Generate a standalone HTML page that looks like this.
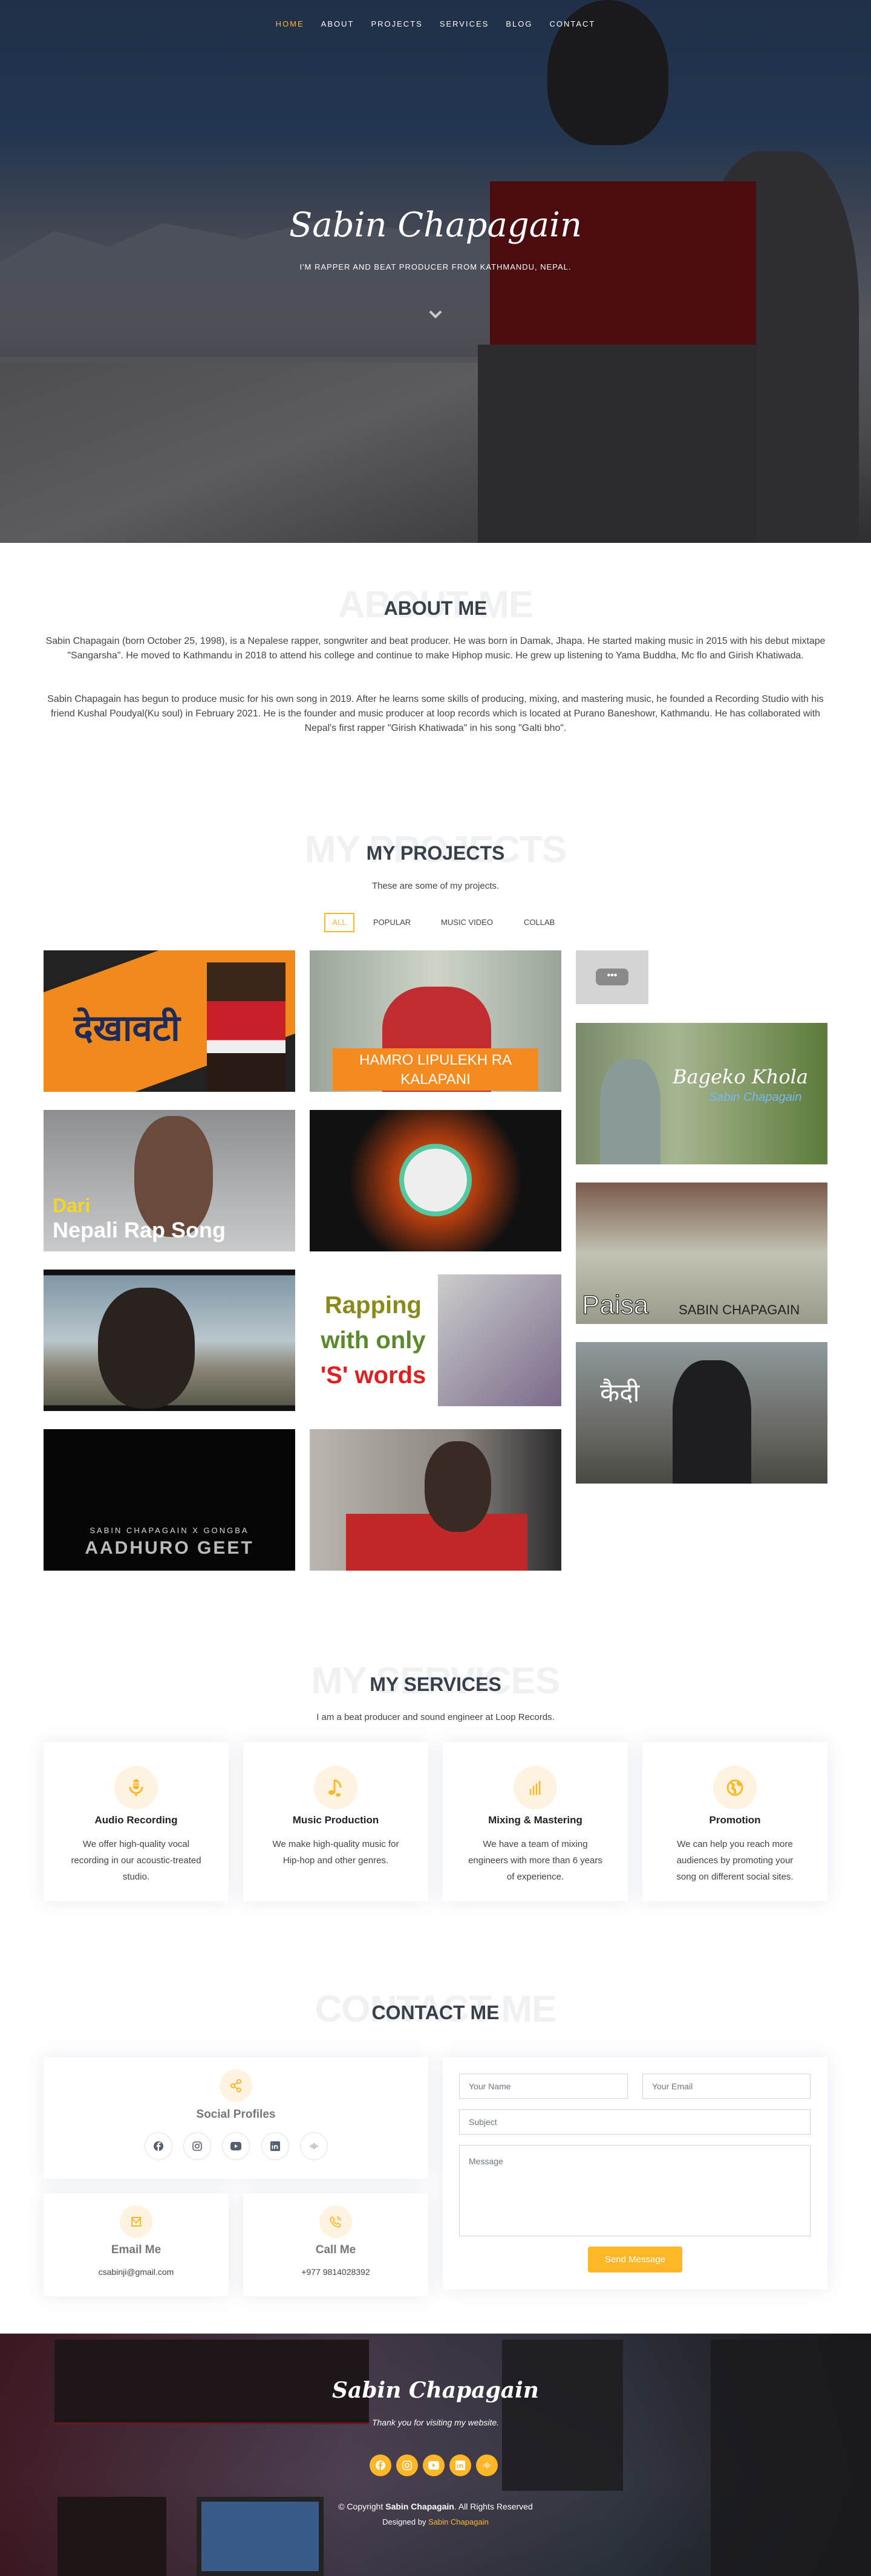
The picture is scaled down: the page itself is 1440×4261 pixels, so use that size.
<!DOCTYPE html>
<html><head><meta charset="utf-8">
<style>
*{box-sizing:border-box;margin:0;padding:0}
body{width:1440px;height:4261px;position:relative;background:#fff;font-family:"Liberation Sans",sans-serif;color:#444;overflow:hidden}
.abs{position:absolute}
.hero{left:0;top:0;width:1440px;height:898px;background:
linear-gradient(180deg,#1f3048 0%,#233650 25%,#3e4452 40%,#55575c 60%,#4a4a4e 80%,#2e2e32 100%);overflow:hidden}
nav{left:0;top:32px;width:1440px;text-align:center;font-size:13px;letter-spacing:2px;color:#fff}
nav span{margin:0 14px}
.sec-ghost{left:0;width:1440px;text-align:center;font-size:62px;font-weight:bold;color:#f0f1f3;letter-spacing:-1px}
.sec-h{left:0;width:1440px;text-align:center;font-size:32px;font-weight:bold;color:#37404a}
.p{left:72px;width:1296px;text-align:center;font-size:15.9px;line-height:24px;color:#444}
.tile{position:absolute;width:416px;height:234px;overflow:hidden}
.card{position:absolute;background:#fff;box-shadow:0 0 29px rgba(68,88,144,.12)}
.ic{position:absolute;border-radius:50%;background:#fef3e0;display:flex;align-items:center;justify-content:center}
.ct{position:absolute;width:100%;text-align:center}
.inp{position:absolute;border:1px solid #ced4da;font-size:14px;color:#6c757d;padding:0 15px;display:flex;align-items:center}
.soc{position:absolute;width:46px;height:46px;border-radius:50%;border:1px solid #e3e3e3;top:3527px;display:flex;align-items:center;justify-content:center}
.fs{position:absolute;width:36px;height:36px;border-radius:50%;background:#ffb727;top:4060px;display:flex;align-items:center;justify-content:center}
</style></head><body>

<div class="abs hero">
 <div class="abs" style="left:0;top:330px;width:900px;height:260px;background:linear-gradient(180deg,rgba(90,95,105,.5),rgba(70,72,80,.7));clip-path:polygon(0 40%,10% 20%,20% 30%,30% 15%,45% 25%,60% 12%,75% 20%,100% 30%,100% 100%,0 100%)"></div>
 <div class="abs" style="left:0;top:600px;width:900px;height:298px;background:linear-gradient(160deg,#4e4e52,#5c5c60 50%,#3a3a3e)"></div>
 <div class="abs" style="left:905px;top:0;width:200px;height:240px;border-radius:50% 50% 40% 40%;background:#1a1a1e"></div>
 <div class="abs" style="left:1150px;top:250px;width:270px;height:648px;border-radius:40% 40% 0 0;background:#2e2e32"></div>
 <div class="abs" style="left:810px;top:300px;width:440px;height:300px;background:#4a0c0e"></div>
 <div class="abs" style="left:790px;top:570px;width:460px;height:328px;background:#2c2c30"></div>
</div>
<nav class="abs"><span style="color:#ffb727">HOME</span><span>ABOUT</span><span>PROJECTS</span><span>SERVICES</span><span>BLOG</span><span>CONTACT</span></nav>
<div class="abs" style="left:0;top:340px;width:1440px;text-align:center;font-family:'DejaVu Serif',serif;font-style:italic;font-size:56px;color:#fff">Sabin Chapagain</div>
<div class="abs" style="left:0;top:434px;width:1440px;text-align:center;font-size:13px;letter-spacing:1px;color:#fff">I'M RAPPER AND BEAT PRODUCER FROM KATHMANDU, NEPAL.</div>
<svg class="abs" style="left:708px;top:510px" width="24" height="20" viewBox="0 0 24 20"><path d="M3 5 L12 14 L21 5" stroke="#ccc" stroke-width="4" fill="none"/></svg>

<div class="abs sec-ghost" style="top:965px">ABOUT ME</div>
<div class="abs sec-h" style="top:988px">ABOUT ME</div>
<div class="abs p" style="top:1049px">Sabin Chapagain (born October 25, 1998), is a Nepalese rapper, songwriter and beat producer. He was born in Damak, Jhapa. He started making music in 2015 with his debut mixtape "Sangarsha". He moved to Kathmandu in 2018 to attend his college and continue to make Hiphop music. He grew up listening to Yama Buddha, Mc flo and Girish Khatiwada.</div>
<div class="abs p" style="top:1145px">Sabin Chapagain has begun to produce music for his own song in 2019. After he learns some skills of producing, mixing, and mastering music, he founded a Recording Studio with his friend Kushal Poudyal(Ku soul) in February 2021. He is the founder and music producer at loop records which is located at Purano Baneshowr, Kathmandu. He has collaborated with Nepal's first rapper "Girish Khatiwada" in his song "Galti bho".</div>

<div class="abs sec-ghost" style="top:1370px">MY PROJECTS</div>
<div class="abs sec-h" style="top:1393px">MY PROJECTS</div>
<div class="abs" style="left:0;top:1457px;width:1440px;text-align:center;font-size:15px">These are some of my projects.</div>
<div class="abs" style="left:536px;top:1510px;width:50px;height:32px;border:2px solid #ffb727;color:#ffb727;font-size:13px;text-align:center;line-height:28px">ALL</div>
<div class="abs" style="left:617px;top:1518px;font-size:13px;color:#444">POPULAR</div>
<div class="abs" style="left:729px;top:1518px;font-size:13px;color:#444">MUSIC VIDEO</div>
<div class="abs" style="left:866px;top:1518px;font-size:13px;color:#444">COLLAB</div>

<div class="tile" style="left:72px;top:1572px;background:linear-gradient(160deg,#222 0 18%,#f08a1c 18% 75%,#222 75%)"><div class="abs" style="left:50px;top:80px;font-size:60px;font-weight:bold;color:#1d2a5a;font-family:'Noto Sans CJK SC',sans-serif">देखावटी</div><div class="abs" style="left:270px;top:20px;width:130px;height:214px;background:linear-gradient(#3a2618 0 30%,#c71e28 30% 60%,#eee 60% 70%,#2a1a14 70%)"></div></div>
<div class="tile" style="left:512px;top:1572px;background:linear-gradient(90deg,#9aa59a,#cfd4c8,#9aa59a)"><div class="abs" style="left:120px;top:60px;width:180px;height:174px;border-radius:40% 40% 0 0;background:#c02c30"></div><div class="abs" style="left:38px;top:162px;width:340px;height:70px;background:#f58b1f;color:#fff;font-size:24px;text-align:center;line-height:32px;padding-top:4px">HAMRO LIPULEKH RA<br>KALAPANI</div></div>
<div class="tile" style="left:952px;top:1572px;width:120px;height:89px;background:#d4d4d4"><div class="abs" style="left:33px;top:30px;width:54px;height:28px;border-radius:8px;background:#8a8a8a;color:#fff;text-align:center;font-weight:bold;line-height:24px">•••</div></div>

<div class="tile" style="left:72px;top:1836px;background:linear-gradient(#8c8e90,#c9cacb)"><div class="abs" style="left:150px;top:10px;width:130px;height:200px;border-radius:45%;background:#6a4a3a"></div><div class="abs" style="left:15px;top:140px;font-size:32px;font-weight:bold;color:#f5d623">Dari</div><div class="abs" style="left:15px;top:178px;font-size:36px;font-weight:bold;color:#fff">Nepali Rap Song</div></div>
<div class="tile" style="left:512px;top:1836px;background:radial-gradient(circle at 50% 50%,#e8701a 0,#a83a10 30%,#111 60%)"><div class="abs" style="left:148px;top:56px;width:120px;height:120px;border-radius:50%;background:#eee;border:8px solid #56c8a0"></div></div>
<div class="tile" style="left:952px;top:1692px;background:linear-gradient(90deg,#7a8a6a,#a6b690 40%,#5c7a3a)"><div class="abs" style="left:40px;top:60px;width:100px;height:174px;border-radius:40% 40% 0 0;background:#8a9a98"></div><div class="abs" style="left:160px;top:70px;font-family:'DejaVu Serif',serif;font-style:italic;font-size:32px;color:#fff">Bageko Khola</div><div class="abs" style="left:220px;top:112px;font-style:italic;font-size:20px;color:#7ab8f0">Sabin Chapagain</div></div>

<div class="tile" style="left:72px;top:2100px;background:linear-gradient(#111 0 4%,#7f97a6 4%,#b9c6cc 50%,#8a8576 70%,#5a5a4a 96%,#111 96%)"><div class="abs" style="left:90px;top:30px;width:160px;height:200px;border-radius:45%;background:#2a221e"></div></div>
<div class="tile" style="left:512px;top:2100px;background:#fff"><div class="abs" style="left:0;top:30px;width:210px;font-size:40px;font-weight:bold;text-align:center;line-height:58px;color:#8a8a1a">Rapping<br><span style="color:#5a8a2a">with only</span><br><span style="color:#e02020">'S' words</span></div><div class="abs" style="left:212px;top:8px;width:204px;height:218px;background:linear-gradient(135deg,#ccc,#7a6a8a)"></div></div>
<div class="tile" style="left:952px;top:1956px;background:linear-gradient(#7a5a4a,#c2c2b2 50%,#9a9a8a)"><div class="abs" style="left:10px;top:178px;font-size:44px;color:#fff;-webkit-text-stroke:1px #000">Paisa</div><div class="abs" style="left:170px;top:198px;font-size:22px;color:#222">SABIN CHAPAGAIN</div></div>

<div class="tile" style="left:72px;top:2364px;background:#050505"><div class="abs" style="left:0;top:160px;width:416px;text-align:center;font-size:13px;letter-spacing:3px;color:#ddd">SABIN CHAPAGAIN X GONGBA</div><div class="abs" style="left:0;top:180px;width:416px;text-align:center;font-size:30px;letter-spacing:3px;color:#bbb;font-weight:bold">AADHURO GEET</div></div>
<div class="tile" style="left:512px;top:2364px;background:linear-gradient(90deg,#bcb6b0,#8a8480 60%,#2a2a2a)"><div class="abs" style="left:60px;top:140px;width:300px;height:94px;background:#c2282a"></div><div class="abs" style="left:190px;top:20px;width:110px;height:150px;border-radius:45%;background:#3a2a24"></div></div>
<div class="tile" style="left:952px;top:2220px;background:linear-gradient(#8f9a9c,#6a6a66 60%,#4a4a44)"><div class="abs" style="left:160px;top:30px;width:130px;height:204px;border-radius:40% 40% 0 0;background:#1e1e22"></div><div class="abs" style="left:40px;top:50px;font-size:42px;color:#fff;font-family:'Noto Sans CJK SC',sans-serif">कैदी</div></div>

<div class="abs sec-ghost" style="top:2745px">MY SERVICES</div>
<div class="abs sec-h" style="top:2768px">MY SERVICES</div>
<div class="abs" style="left:0;top:2832px;width:1440px;text-align:center;font-size:15px">I am a beat producer and sound engineer at Loop Records.</div>

<div class="card" style="left:72px;top:2882px;width:306px;height:263px"><div class="ic" style="left:117px;top:39px;width:72px;height:72px"><svg width="28" height="30" viewBox="0 0 28 30"><rect x="9" y="1" width="10" height="17" rx="5" fill="#ffb727"/><path d="M4 14 a10 10 0 0 0 20 0" stroke="#ffb727" stroke-width="3" fill="none"/><path d="M14 24v5" stroke="#ffb727" stroke-width="3"/><path d="M9 7h10M9 11h10" stroke="#fef3e0" stroke-width="1.5"/></svg></div><div class="ct" style="top:119px;font-weight:bold;font-size:17px;color:#222">Audio Recording</div><div class="ct" style="top:155px;padding:0 40px;font-size:15px;line-height:27px">We offer high-quality vocal recording in our acoustic-treated studio.</div></div>
<div class="card" style="left:402px;top:2882px;width:306px;height:263px"><div class="ic" style="left:117px;top:39px;width:72px;height:72px"><svg width="28" height="32" viewBox="0 0 28 32"><path d="M12 3v22" stroke="#ffb727" stroke-width="3"/><path d="M12 3c6 3 10 6 10 13" stroke="#ffb727" stroke-width="3" fill="none"/><ellipse cx="7" cy="24" rx="5" ry="4" fill="#ffb727"/><ellipse cx="18" cy="28" rx="4" ry="3" fill="#ffb727"/></svg></div><div class="ct" style="top:119px;font-weight:bold;font-size:17px;color:#222">Music Production</div><div class="ct" style="top:155px;padding:0 40px;font-size:15px;line-height:27px">We make high-quality music for Hip-hop and other genres.</div></div>
<div class="card" style="left:732px;top:2882px;width:306px;height:263px"><div class="ic" style="left:117px;top:39px;width:72px;height:72px"><svg width="24" height="24" viewBox="0 0 24 24"><path d="M4 24V14M9 24V9M14 24V5M19 24V1" stroke="#ffb727" stroke-width="2.5"/></svg></div><div class="ct" style="top:119px;font-weight:bold;font-size:17px;color:#222">Mixing &amp; Mastering</div><div class="ct" style="top:155px;padding:0 40px;font-size:15px;line-height:27px">We have a team of mixing engineers with more than 6 years of experience.</div></div>
<div class="card" style="left:1062px;top:2882px;width:306px;height:263px"><div class="ic" style="left:117px;top:39px;width:72px;height:72px"><svg width="28" height="28" viewBox="0 0 28 28"><circle cx="14" cy="14" r="12" stroke="#ffb727" stroke-width="3" fill="none"/><path d="M8 6l4 4-2 5 4 3v6M18 5l2 4 4 1" stroke="#ffb727" stroke-width="4" fill="none"/></svg></div><div class="ct" style="top:119px;font-weight:bold;font-size:17px;color:#222">Promotion</div><div class="ct" style="top:155px;padding:0 40px;font-size:15px;line-height:27px">We can help you reach more audiences by promoting your song on different social sites.</div></div>

<div class="abs sec-ghost" style="top:3288px">CONTACT ME</div>
<div class="abs sec-h" style="top:3311px">CONTACT ME</div>

<div class="card" style="left:72px;top:3403px;width:636px;height:201px"><div class="ic" style="left:291px;top:20px;width:54px;height:54px"><svg width="20" height="22" viewBox="0 0 20 22"><circle cx="15" cy="4" r="3" stroke="#ffb727" stroke-width="2" fill="none"/><circle cx="5" cy="11" r="3" stroke="#ffb727" stroke-width="2" fill="none"/><circle cx="15" cy="18" r="3" stroke="#ffb727" stroke-width="2" fill="none"/><path d="M7.5 9.5l5-4M7.5 12.5l5 4" stroke="#ffb727" stroke-width="2"/></svg></div><div class="ct" style="top:84px;font-weight:bold;font-size:19px;color:#777">Social Profiles</div></div>
<div class="soc" style="left:239px"><svg width="18" height="18" viewBox="0 0 18 18"><circle cx="9" cy="9" r="8" fill="#556070"/><path d="M10 17V10h2.3l.3-2.5H10V6c0-.7.3-1.2 1.2-1.2h1.4V2.6H10.6C8.6 2.6 7.5 3.8 7.5 5.7v1.8H5.5V10h2v7z" fill="#fff"/></svg></div>
<div class="soc" style="left:303px"><svg width="16" height="16" viewBox="0 0 16 16"><rect x="1" y="1" width="14" height="14" rx="4" stroke="#556070" stroke-width="1.6" fill="none"/><circle cx="8" cy="8" r="3.2" stroke="#556070" stroke-width="1.6" fill="none"/><circle cx="12" cy="4" r=".9" fill="#556070"/></svg></div>
<div class="soc" style="left:367px"><svg width="18" height="14" viewBox="0 0 18 14"><rect width="18" height="14" rx="4" fill="#556070"/><path d="M7 4l5 3-5 3z" fill="#fff"/></svg></div>
<div class="soc" style="left:432px"><svg width="16" height="16" viewBox="0 0 16 16"><rect width="16" height="16" rx="2" fill="#556070"/><path d="M3.5 6.5v6M3.5 3.5v.5M7 12.5v-6M7 9c0-2 4.5-3 4.5 0v3.5" stroke="#fff" stroke-width="1.8" fill="none"/></svg></div>
<div class="soc" style="left:496px"><svg width="16" height="16" viewBox="0 0 16 16"><path d="M2 7v2M5 5v6M8 3v10M11 5v6M14 7v2" stroke="#8a95a5" stroke-width="1.4"/></svg></div>

<div class="card" style="left:72px;top:3628px;width:306px;height:170px"><div class="ic" style="left:126px;top:20px;width:54px;height:54px"><svg width="18" height="18" viewBox="0 0 18 18"><rect x="2" y="2" width="14" height="14" stroke="#ffb727" stroke-width="2" fill="none"/><path d="M2 3l7 8 7-8" stroke="#ffb727" stroke-width="2" fill="none"/></svg></div><div class="ct" style="top:83px;font-weight:bold;font-size:19px;color:#777">Email Me</div><div class="ct" style="top:122px;font-size:14px">csabinji@gmail.com</div></div>
<div class="card" style="left:402px;top:3628px;width:306px;height:170px"><div class="ic" style="left:126px;top:20px;width:54px;height:54px"><svg width="20" height="20" viewBox="0 0 20 20"><path d="M4 2l4 4-2 2c1 3 3 5 6 6l2-2 4 4-3 3C8 18 2 12 1 5z" stroke="#ffb727" stroke-width="1.8" fill="none"/><path d="M12 2a6 6 0 0 1 6 6M12 5a3 3 0 0 1 3 3" stroke="#ffb727" stroke-width="1.6" fill="none"/></svg></div><div class="ct" style="top:83px;font-weight:bold;font-size:19px;color:#777">Call Me</div><div class="ct" style="top:122px;font-size:14px">+977 9814028392</div></div>

<div class="card" style="left:732px;top:3403px;width:636px;height:384px"></div>
<div class="inp" style="left:759px;top:3430px;width:279px;height:42px">Your Name</div>
<div class="inp" style="left:1062px;top:3430px;width:278px;height:42px">Your Email</div>
<div class="inp" style="left:759px;top:3489px;width:581px;height:42px">Subject</div>
<div class="inp" style="left:759px;top:3548px;width:581px;height:151px;align-items:flex-start;padding-top:18px">Message</div>
<div class="abs" style="left:972px;top:3716px;width:156px;height:43px;border-radius:4px;background:#ffb727;color:#fff;font-size:15px;text-align:center;line-height:43px">Send Message</div>

<div class="abs" style="left:0;top:3860px;width:1440px;height:401px;background:
linear-gradient(90deg,rgba(60,20,30,.85),rgba(70,60,80,.7) 40%,rgba(40,50,60,.75) 70%,rgba(20,20,24,.9)),linear-gradient(#3a2a30,#5a4a56 60%,#2a2a2e)"></div>
<div class="abs" style="left:90px;top:3870px;width:520px;height:140px;background:#1e1618;border-bottom:3px solid #6a1a1e"></div>
<div class="abs" style="left:830px;top:3870px;width:200px;height:250px;background:#1c1a1e;opacity:.8"></div>
<div class="abs" style="left:1175px;top:3870px;width:265px;height:391px;background:#1a1a1e;opacity:.85"></div>
<div class="abs" style="left:95px;top:4130px;width:180px;height:131px;background:#1e1616"></div>
<div class="abs" style="left:325px;top:4130px;width:210px;height:131px;background:#3a5a8a;border:8px solid #222"></div>
<div class="abs" style="left:0;top:3933px;width:1440px;text-align:center;font-family:'DejaVu Serif',serif;font-style:italic;font-weight:bold;font-size:36px;color:#fff">Sabin Chapagain</div>
<div class="abs" style="left:0;top:3999px;width:1440px;text-align:center;font-style:italic;font-size:14px;color:#fff">Thank you for visiting my website.</div>
<div class="fs" style="left:611px"><svg width="18" height="18" viewBox="0 0 18 18"><circle cx="9" cy="9" r="8" fill="#fff"/><path d="M10 17V10h2.3l.3-2.5H10V6c0-.7.3-1.2 1.2-1.2h1.4V2.6H10.6C8.6 2.6 7.5 3.8 7.5 5.7v1.8H5.5V10h2v7z" fill="#ffb727"/></svg></div>
<div class="fs" style="left:655px"><svg width="16" height="16" viewBox="0 0 16 16"><rect x="1" y="1" width="14" height="14" rx="4" stroke="#fff" stroke-width="1.6" fill="none"/><circle cx="8" cy="8" r="3.2" stroke="#fff" stroke-width="1.6" fill="none"/></svg></div>
<div class="fs" style="left:699px"><svg width="18" height="14" viewBox="0 0 18 14"><rect width="18" height="14" rx="4" fill="#fff"/><path d="M7 4l5 3-5 3z" fill="#ffb727"/></svg></div>
<div class="fs" style="left:743px"><svg width="16" height="16" viewBox="0 0 16 16"><rect width="16" height="16" rx="2" fill="#fff"/><path d="M3.5 6.5v6M3.5 3.5v.5M7 12.5v-6M7 9c0-2 4.5-3 4.5 0v3.5" stroke="#ffb727" stroke-width="1.8" fill="none"/></svg></div>
<div class="fs" style="left:787px"><svg width="16" height="16" viewBox="0 0 16 16"><path d="M2 7v2M5 5v6M8 3v10M11 5v6M14 7v2" stroke="#fff" stroke-width="1.4"/></svg></div>
<div class="abs" style="left:0;top:4138px;width:1440px;text-align:center;font-size:14px;color:#fff">© Copyright <b>Sabin Chapagain</b>. All Rights Reserved</div>
<div class="abs" style="left:0;top:4164px;width:1440px;text-align:center;font-size:13px;color:#fff">Designed by <span style="color:#ffb727">Sabin Chapagain</span></div>
</body></html>
